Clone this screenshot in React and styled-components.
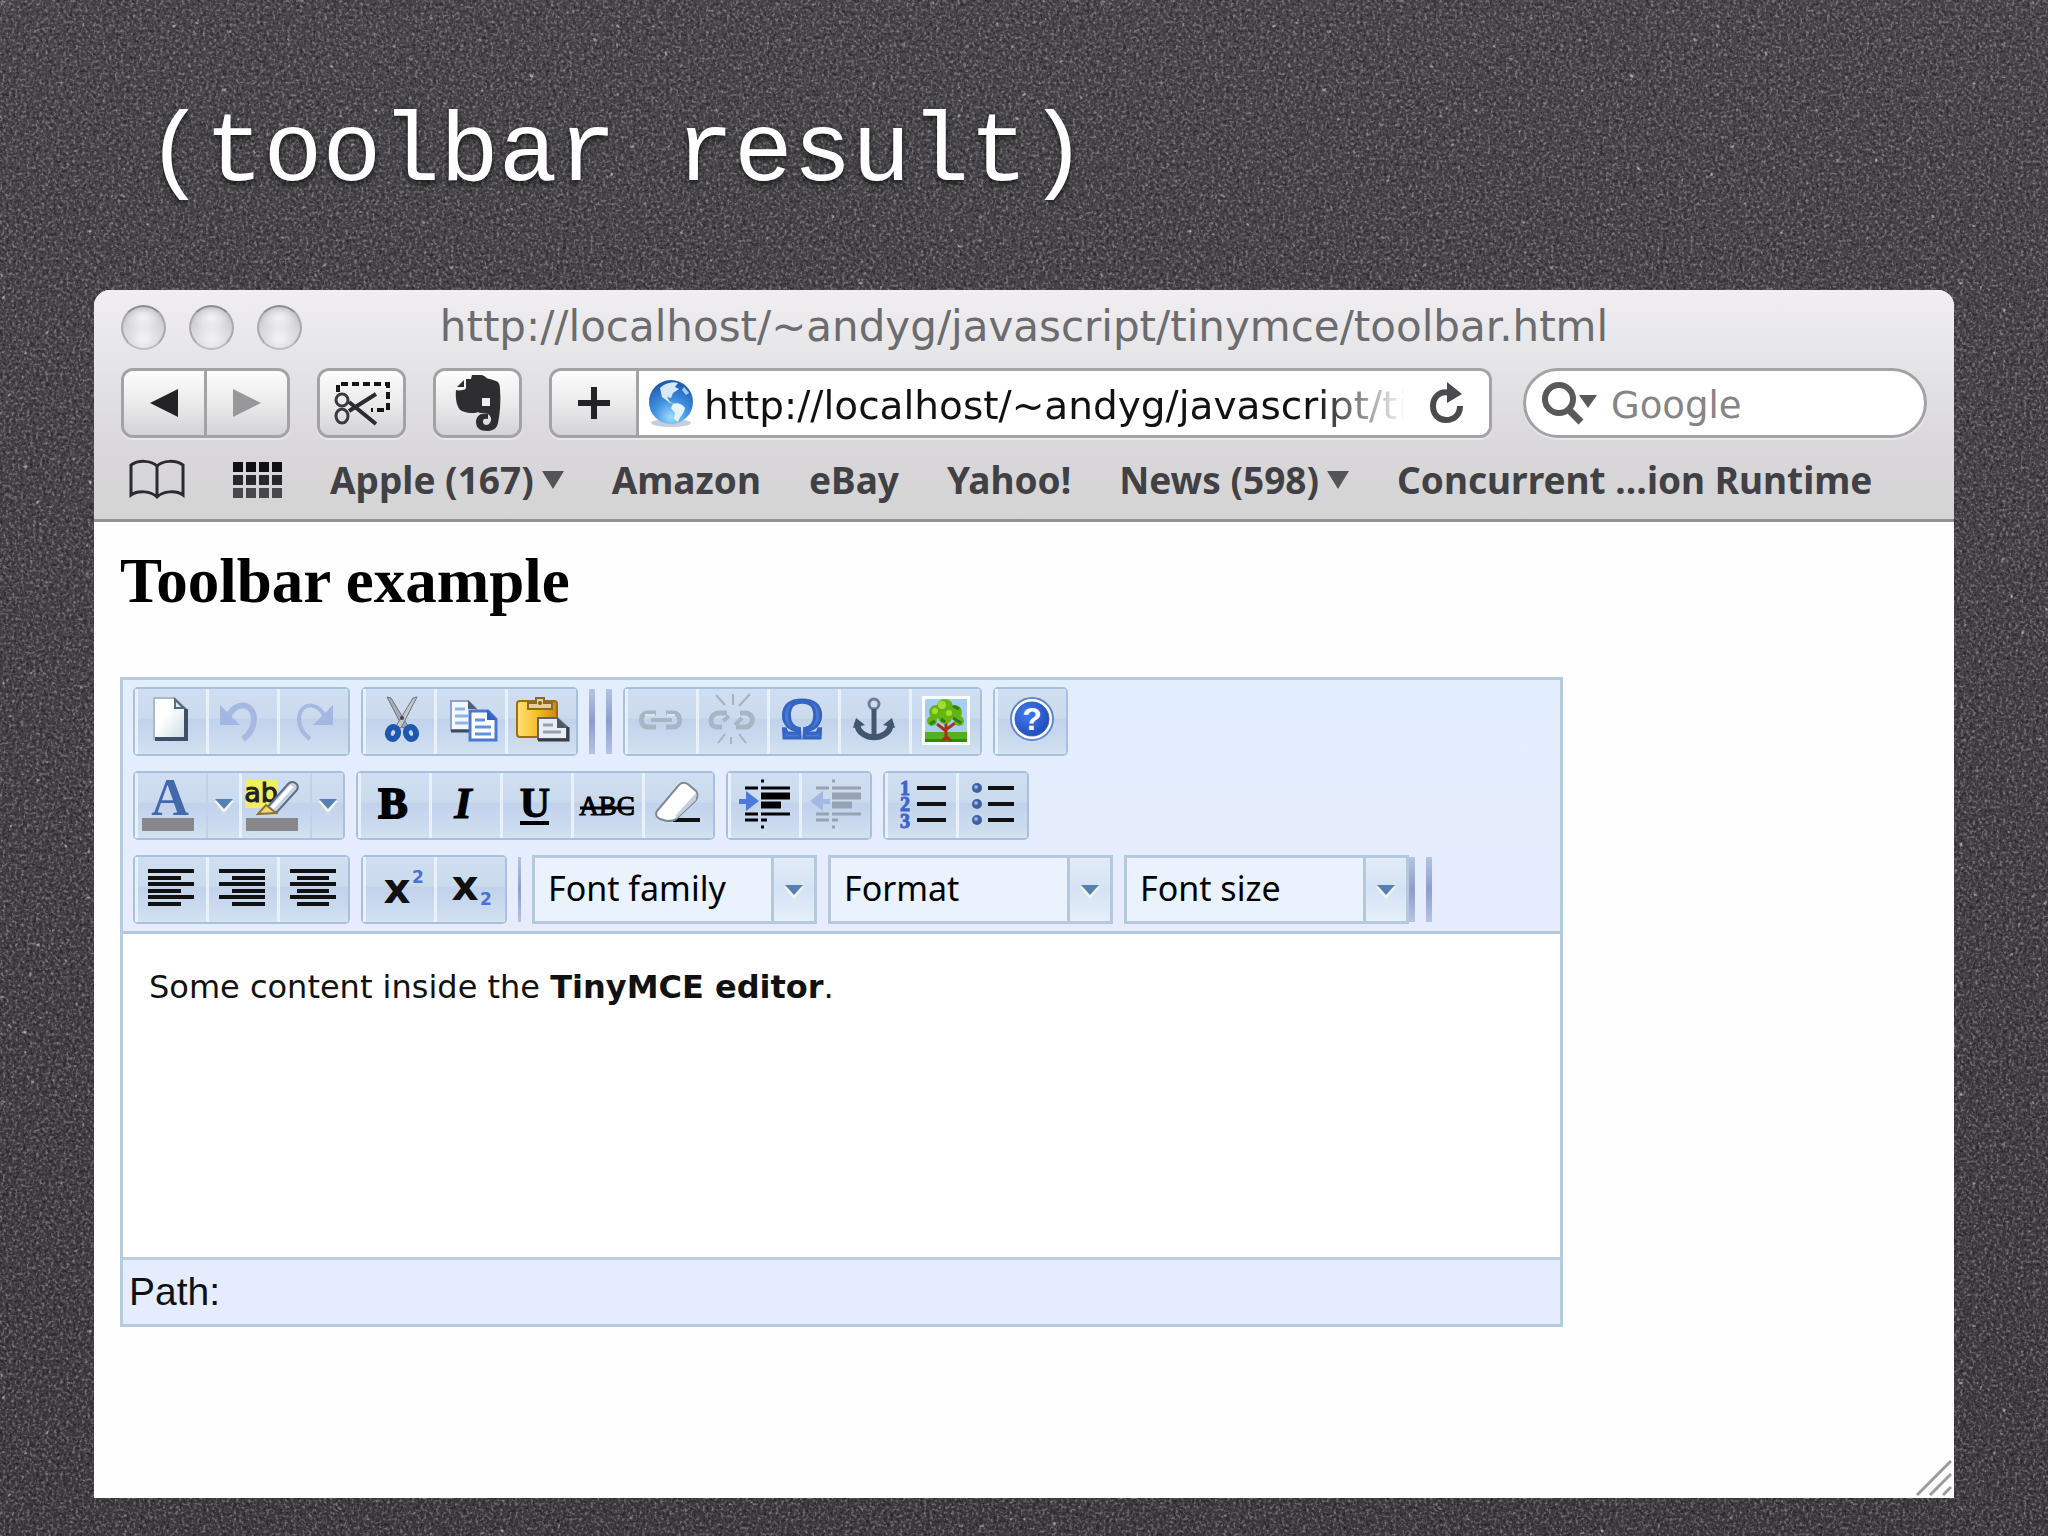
import React from "react";
import styled, { createGlobalStyle, css } from "styled-components";

/* ---------- slide background ---------- */

const noise = (seed, freq, rgb, gain, bias) => `
  <filter id="f${seed}" x="0" y="0" width="100%" height="100%" color-interpolation-filters="sRGB">
    <feTurbulence type="fractalNoise" baseFrequency="${freq}" numOctaves="2" seed="${seed}" stitchTiles="stitch"/>
    <feColorMatrix values="0 0 0 0 ${rgb} 0 0 0 0 ${rgb} 0 0 0 0 ${rgb} ${gain} 0 0 0 ${bias}"/>
  </filter>`;

const grain = encodeURIComponent(`<svg xmlns="http://www.w3.org/2000/svg" width="1100" height="1100">
  ${noise(3, 0.33, 1, 0.9, -0.42)}${noise(8, 0.3, 0, 1.1, -0.5)}${noise(5, 0.14, 1, 6, -4.5)}
  <rect width="1100" height="1100" filter="url(#f3)"/>
  <rect width="1100" height="1100" filter="url(#f8)"/>
  <rect width="1100" height="1100" filter="url(#f5)" opacity="0.6"/>
</svg>`);

const GlobalStyle = createGlobalStyle`
  *, *::before, *::after { box-sizing: border-box; }
  body { margin: 0; }
  button, input, select { font: inherit; color: inherit; margin: 0; }
`;

const Slide = styled.main`
  min-height: 100vh;
  display: flex;
  flex-direction: column;
  padding: 98px 94px 38px;
  background-image: url("data:image/svg+xml,${grain}"), linear-gradient(#474549, #3d3a3e);
`;

const SlideTitle = styled.h1`
  margin: 0 52px 80px;
  font: 400 98px/112px "Liberation Mono", monospace;
  color: #fff;
  text-shadow: 0 3px 6px rgba(0, 0, 0, 0.7);
`;

/* ---------- browser window ---------- */

const Window = styled.section`
  position: relative;
  flex: 1;
  display: flex;
  flex-direction: column;
  border-radius: 16px 16px 0 0;
  overflow: hidden;
  background: #fefefe;
`;

const Chrome = styled.header`
  padding: 0 27px;
  background: linear-gradient(#f0eef0, #e4e3e5 35%, #d9d7d9 70%, #d5d4d5);
  border-bottom: 3px solid #929193;
  font-family: "DejaVu Sans", sans-serif;
`;

const TitleBar = styled.div`
  display: grid;
  grid-template-columns: 1fr auto 1fr;
  align-items: center;
  height: 74px;
`;

const Lights = styled.div`
  display: flex;
  gap: 23px;
`;

const Light = styled.button`
  width: 45px;
  height: 45px;
  padding: 0;
  border: 2px solid #aaa8ab;
  border-top-color: #8f8d90;
  border-bottom-color: #bdbbbe;
  border-radius: 50%;
  background:
    radial-gradient(ellipse 50% 36% at 50% 26%, #f4f3f5, rgba(244, 243, 245, 0) 90%),
    radial-gradient(circle at 50% 75%, #efeef0 10%, #d2d1d4 60%, #a9a8ab);
`;

const WindowTitle = styled.h2`
  margin: 0;
  font-size: 42px;
  line-height: 74px;
  font-weight: 400;
  color: #6c6b6e;
`;

const NavRow = styled.div`
  display: flex;
  gap: 27px;
  padding-top: 4px;
`;

const frame = css`
  border: 3px solid #a3a2a5;
  box-shadow: 0 2px 0 rgba(255, 255, 255, 0.4);
`;

const ButtonFrame = styled.div`
  ${frame}
  display: flex;
  height: 70px;
  border-radius: 12px;
  overflow: hidden;
`;

const ChromeButton = styled.button`
  display: grid;
  place-items: center;
  width: ${(p) => p.$width || 82}px;
  padding: 0;
  border: 0;
  background: linear-gradient(#fcfcfd, #ebebec 50%, #d3d2d5);

  & + &, & + form {
    border-left: 3px solid #a3a2a5;
  }
`;

const AddressBar = styled(ButtonFrame)`
  flex: 1;
  min-width: 0;
`;

const AddressForm = styled.form`
  flex: 1;
  min-width: 0;
  display: flex;
  align-items: center;
  padding-left: 9px;
  background: #fff;
`;

const TextInput = styled.input`
  flex: 1;
  width: 0;
  min-width: 0;
  height: 64px;
  padding: 4px 0 0;
  border: 0;
  outline: 0;
  background: none;
`;

const AddressInput = styled(TextInput)`
  margin-left: 10px;
  font-size: 39px;
  color: #111;
  mask-image: linear-gradient(to right, #000 calc(100% - 90px), transparent);
`;

const ReloadButton = styled.button`
  display: grid;
  place-items: center;
  width: 84px;
  padding: 0;
  border: 0;
  background: none;
`;

const SearchForm = styled.form`
  ${frame}
  display: flex;
  align-items: center;
  flex: none;
  width: 404px;
  height: 70px;
  margin-left: 4px;
  padding: 0 24px 0 15px;
  border-radius: 35px;
  background: #fff;
`;

const SearchInput = styled(TextInput)`
  margin-left: 12px;
  font-size: 37px;

  &::placeholder {
    color: #858487;
    opacity: 1;
  }
`;

const Bookmarks = styled.nav`
  display: flex;
  align-items: center;
  gap: 48px;
  height: 81px;
  padding: 2px 0 0 8px;
  font: 700 37px/50px "Noto Sans", sans-serif;
  color: #414145;
  white-space: nowrap;
`;

const BookmarkIcon = styled.button`
  display: flex;
  padding: 0;
  border: 0;
  background: none;
`;

const BookmarkLink = styled.a`
  display: flex;
  align-items: center;
  gap: 8px;
  color: inherit;
  text-decoration: none;
`;

const Grip = styled.svg`
  position: absolute;
  right: 2px;
  bottom: 2px;
`;

/* ---------- page and editor ---------- */

const Page = styled.article`
  flex: 1;
  padding: 24px 26px 0;
`;

const Heading = styled.h3`
  margin: 0 0 61px;
  font: 700 63px/70px "Liberation Serif", serif;
  color: #000;
`;

const Editor = styled.div`
  max-width: 1443px;
  border: 3px solid #b7cbdd;
`;

const Toolbars = styled.div`
  display: flex;
  flex-direction: column;
  gap: 15px;
  padding: 7px 10px;
  background: linear-gradient(#e2eefd, #e5edfd 50%, #e6ecfd);
  border-bottom: 3px solid #b4c8e6;
`;

const Row = styled.div`
  display: flex;
  flex-wrap: wrap;
  gap: 11px;
`;

const Group = styled.div`
  display: flex;
  border: 2px solid #a9bfe0;
  border-radius: 5px;
`;

const buttonFill = css`
  background: linear-gradient(#cfdef0, #cbdbee 44%, #c3d2ec 47%, #c9d9ee 75%, #d2e2ef);
`;

const ToolButton = styled.button`
  ${buttonFill}
  display: flex;
  width: 71px;
  height: 65px;
  padding: 0;
  border: 0;
  box-shadow: inset 3px 0 0 rgba(236, 244, 253, 0.85);
`;

const MenuButton = styled(ToolButton)`
  width: 33px;
  box-shadow: inset 2px 0 0 #c0d2ea;
`;

const FaceSvg = styled.svg`
  display: block;
  overflow: visible;
`;

const Separator = styled.span`
  width: ${(p) => p.$width || 6}px;
  height: 65px;
  margin: 2px 0;
  background: linear-gradient(#b5c3e5, #8f9ccc 50%, #b5c3e5);
`;

const SelectBox = styled.div`
  display: grid;
  grid-template-columns: 1fr 43px;
  grid-template-rows: 63px;
  width: 285px;
  height: 69px;
  border: 3px solid #b6c8dc;
  background: #eaf2fd;
`;

const Select = styled.select`
  grid-area: 1 / 1 / 2 / 3;
  appearance: none;
  padding: 0 0 4px 13px;
  border: 0;
  outline: 0;
  background: transparent;
  font: 400 34px/50px "Noto Sans", sans-serif;
  color: #000;
`;

const SelectArrow = styled.span`
  grid-area: 1 / 2 / 2 / 3;
  display: grid;
  place-items: center;
  pointer-events: none;
  border-left: 3px solid #b6c8dc;
  background: linear-gradient(#e2ecf8, #d5e2f5 50%, #e6f0fb);
`;

const Joined = styled.div`
  display: flex;
`;

const Content = styled.div`
  min-height: 323px;
  padding: 33px 26px;
  outline: 0;
  background: #fff;
  font: 400 32px/40px "DejaVu Sans", sans-serif;
  color: #111;

  p {
    margin: 0;
  }
`;

const PathBar = styled.div`
  padding: 0 6px;
  border-top: 3px solid #b7cfdf;
  background: #e5ecfd;
  font: 400 39px/64px "Liberation Sans", sans-serif;
  color: #111;
`;

/* ---------- icons: each one is drawn on its button's 71 x 65 face ---------- */

const Face = ({ width = 71, children }) => (
  <FaceSvg width={width} height="65" viewBox={`0 0 ${width} 65`} aria-hidden="true">
    {children}
  </FaceSvg>
);

const serif = { fontFamily: "Liberation Serif, serif", fontWeight: 700 };

const lines = (list, color = "#111", w = 4) =>
  list.map(([x1, x2, y], i) => (
    <path key={i} d={`M${x1} ${y}H${x2}`} stroke={color} strokeWidth={w} />
  ));

const NewDoc = () => (
  <Face>
    <defs>
      <linearGradient id="paper" x1="0" y1="0" x2="1" y2="1">
        <stop offset="0.4" stopColor="#fff" />
        <stop offset="1" stopColor="#c9dbe4" />
      </linearGradient>
    </defs>
    <path d="M19 9H39L51 21V50H19Z" fill="url(#paper)" stroke="#a9b9cc" strokeWidth="2" />
    <path d="M51 20V50H20" fill="none" stroke="#3f4f66" strokeWidth="4" />
    <path d="M39 8V20H52Z" fill="#5a6c84" />
    <path d="M41 13V18H46Z" fill="#dfe9f2" />
  </Face>
);

const Undo = ({ flip }) => (
  <Face>
    <g transform={flip ? "translate(70 0) scale(-1 1)" : undefined}>
      <path d="M22 29C25 15 46 10 48 29C48 38 44 45 37 50" fill="none" stroke="#a7b9e2" strokeWidth={flip ? 4 : 6} />
      <path d="M14 16V36H34Z" fill="#a4b7e2" />
    </g>
  </Face>
);

const Cut = () => (
  <Face>
    <path d="M24 8L28 9L45 37L40 39Z" fill="#a8acb2" stroke="#6d737b" />
    <path d="M54 8L50 9L33 37L38 39Z" fill="#c3c6ca" stroke="#6d737b" />
    <circle cx="39" cy="29" r="2" fill="#444" />
    <ellipse cx="30" cy="44" rx="5" ry="6" fill="#c4d6ee" stroke="#1d57ae" strokeWidth="6" transform="rotate(18 30 44)" />
    <ellipse cx="48" cy="44" rx="5" ry="6" fill="#c4d6ee" stroke="#1d57ae" strokeWidth="6" transform="rotate(-18 48 44)" />
  </Face>
);

const Copy = () => (
  <Face>
    <path d="M17 12H34L42 20V41H17Z" fill="#f3f8fd" stroke="#8fa3c0" strokeWidth="2" />
    <path d="M34 11V20H43Z" fill="#4f5f76" />
    <path d="M17 42H36" stroke="#3a4a60" strokeWidth="3" />
    {lines([[21, 31, 20], [21, 34, 27], [21, 34, 34]], "#8fb2ec", 3)}
    <path d="M36 22H54L62 30V51H36Z" fill="#fff" stroke="#4a78d0" strokeWidth="3" />
    <path d="M53 21V31H63Z" fill="#2f62c8" />
    {lines([[41, 51, 31], [41, 57, 38], [41, 57, 45]], "#5f92e4", 3)}
  </Face>
);

const Paste = () => (
  <Face>
    <defs>
      <linearGradient id="board" x1="0" y1="0" x2="1" y2="0">
        <stop offset="0" stopColor="#ffe27a" />
        <stop offset="0.5" stopColor="#f7bf24" />
        <stop offset="1" stopColor="#c98a10" />
      </linearGradient>
    </defs>
    <rect x="12" y="12" width="40" height="36" rx="3" fill="url(#board)" stroke="#a06c10" strokeWidth="2" />
    <path d="M23 20V14H31V9H39V14H47V20Z" fill="#e7cf9a" stroke="#8c6a2c" strokeWidth="2" />
    <circle cx="35" cy="14" r="2" fill="#8c5a12" />
    <path d="M33 29H52L62 38V50H33Z" fill="#e9eef4" stroke="#5c6672" strokeWidth="2" />
    <path d="M33 51H63V38" fill="none" stroke="#3b3f45" strokeWidth="3" />
    <path d="M52 28V39H62Z" fill="#4f5966" />
    {lines([[38, 48, 36], [38, 56, 43]], "#98a2ae", 3)}
  </Face>
);

const Link = () => (
  <Face>
    <g fill="none" stroke="#a9b5c3" strokeWidth="5">
      <path d="M31 24H23C14 24 14 38 23 38H31" />
      <path d="M41 24H48C57 24 57 38 48 38H41" />
      <path d="M26 31H47" strokeWidth="4" />
    </g>
    <path d="M20 26H30M42 26H50" stroke="#dde6ee" strokeWidth="2" />
  </Face>
);

const Unlink = () => (
  <Face>
    <g fill="none" stroke="#a9b5c3" strokeWidth="5">
      <path d="M31 24H23C13 24 12 38 21 38H26" />
      <path d="M44 24H49C59 24 59 38 48 38H40" />
      <path d="M27 32L33 27M39 36L46 29" strokeWidth="4" />
    </g>
    <path d="M20 6L29 16M37 5V16M54 5L43 17M22 54L29 45M35 55V48M50 54L43 45" stroke="#a9b2bc" strokeWidth="2" />
  </Face>
);

const Omega = () => (
  <Face>
    <text x="35" y="49" textAnchor="middle" fontSize="58" fontFamily="Liberation Serif, serif" fill="#4a78d6" stroke="#3565c2" strokeWidth="3">
      Ω
    </text>
  </Face>
);

const Anchor = () => (
  <Face>
    <g fill="none" stroke="#43566f" strokeWidth="4">
      <circle cx="36" cy="15" r="5" stroke="#6c7c92" strokeWidth="3" />
      <path d="M36 20V48" strokeWidth="5" />
      <path d="M19 34C20 53 52 53 53 34" strokeWidth="6" />
    </g>
    <path d="M15 39L18 29L27 36ZM57 39L54 29L45 36Z" fill="#43566f" />
  </Face>
);

const Tree = () => (
  <Face>
    <rect x="13" y="7" width="48" height="49" fill="#fff" />
    <rect x="16" y="10" width="42" height="35" fill="#a6cdf4" />
    <rect x="16" y="43" width="42" height="10" fill="#54b021" />
    <rect x="16" y="50" width="42" height="3" fill="#2f8a14" />
    <path d="M37 51V34M37 42L28 35M38 40L46 34M37 48L33 52M38 48L42 52" stroke="#a8321c" strokeWidth="3" fill="none" />
    <g fill="#63b414">
      <circle cx="36" cy="18" r="8" />
      <circle cx="27" cy="23" r="7" />
      <circle cx="46" cy="23" r="7" />
      <circle cx="23" cy="32" r="5" />
      <circle cx="50" cy="32" r="5" />
      <circle cx="36" cy="28" r="7" />
    </g>
    <g fill="#a4dc2c">
      <circle cx="33" cy="16" r="4" />
      <circle cx="26" cy="22" r="3" />
      <circle cx="40" cy="24" r="3" />
    </g>
    <path d="M44 17L50 20M44 29L52 34M21 35L26 32M32 30L36 33" stroke="#2f7c10" strokeWidth="3" />
  </Face>
);

const Help = () => (
  <Face>
    <defs>
      <radialGradient id="help" cx="0.35" cy="0.35" r="0.8">
        <stop offset="0" stopColor="#3f7cf4" />
        <stop offset="1" stopColor="#1c46b0" />
      </radialGradient>
    </defs>
    <circle cx="37" cy="30" r="21" fill="#fff" stroke="#5f86c8" strokeWidth="2" />
    <circle cx="37" cy="30" r="17" fill="url(#help)" stroke="#3561bd" />
    <text x="37" y="41" textAnchor="middle" fontSize="32" fontWeight="700" fontFamily="Liberation Sans, sans-serif" fill="#fff">
      ?
    </text>
  </Face>
);

const Arrow = () => (
  <g>
    <path d="M8 28L18 40L28 28Z" fill="#f4f6e4" />
    <path d="M9 26H27L18 36Z" fill="#5680b6" />
  </g>
);

const Forecolor = () => (
  <Face>
    <text x="35" y="42" textAnchor="middle" fontSize="52" fill="#4468ae" {...serif}>
      A
    </text>
    <rect x="7" y="45" width="52" height="13" fill="#88888c" />
  </Face>
);

const Backcolor = () => (
  <Face>
    <rect x="6" y="7" width="32" height="28" fill="#f3ee60" />
    <text x="22" y="29" textAnchor="middle" fontSize="27" fontFamily="DejaVu Sans, sans-serif" fill="#222" stroke="#222">
      ab
    </text>
    <path d="M27 36L49 11C53 7 61 10 58 17L37 40Z" fill="#c6d3e4" stroke="#5c6c84" strokeWidth="2" />
    <path d="M33 35L53 13" stroke="#fff" strokeWidth="4" />
    <path d="M19 41L27 32L37 40Z" fill="#f4d878" stroke="#8a7430" strokeWidth="2" />
    <rect x="7" y="45" width="52" height="13" fill="#88888c" />
  </Face>
);

const Bold = () => (
  <Face>
    <text x="35" y="45" textAnchor="middle" fontSize="44" stroke="#000" strokeWidth="2" {...serif}>B</text>
  </Face>
);

const Italic = () => (
  <Face>
    <text x="34" y="45" textAnchor="middle" fontSize="45" fontStyle="italic" stroke="#000" {...serif}>I</text>
  </Face>
);

const Underline = () => (
  <Face>
    <text x="35" y="44" textAnchor="middle" fontSize="42" stroke="#000" {...serif}>U</text>
    {lines([[20, 49, 50]], "#000")}
  </Face>
);

const Strike = () => (
  <Face>
    <text x="36" y="42" textAnchor="middle" fontSize="27" fontFamily="Liberation Serif, serif" stroke="#000">ABC</text>
    {lines([[9, 63, 35]], "#000", 3)}
  </Face>
);

const EraserIcon = () => (
  <Face>
    <path d="M31 47H58" stroke="#111" strokeWidth="4" />
    <path d="M15 38L37 12C39 9 44 9 47 12L54 18C56 20 56 24 54 27L34 46C32 48 28 48 25 48L18 46C14 44 13 41 15 38Z" fill="#fff" stroke="#7e8898" strokeWidth="2" />
    <path d="M34 42L54 20V27L34 46Z" fill="#c6cfda" />
  </Face>
);

const IndentLines = ({ color }) => (
  <g>
    {lines([[17, 30, 15], [17, 30, 41], [17, 30, 47], [33, 62, 15], [33, 62, 41], [33, 39, 47]], color, 3)}
    {lines([[33, 62, 23], [33, 53, 32]], color, 7)}
    {lines([[33, 36, 8], [33, 36, 54]], color, 3)}
  </g>
);

const Indent = () => (
  <Face>
    <IndentLines color="#000" />
    <path d="M11 26H18V18L31 28L18 38V31H11Z" fill="#4d78dc" />
  </Face>
);

const Outdent = () => (
  <Face>
    <IndentLines color="#97a2b2" />
    <path d="M31 26H24V18L11 28L24 38V31H31Z" fill="#a3b9e4" />
  </Face>
);

const NumList = () => (
  <Face>
    {[["1", 22], ["2", 38], ["3", 55]].map(([n, y]) => (
      <text key={n} x="20" y={y} textAnchor="middle" fontSize="20" fill="#3c66cc" stroke="#3c66cc" {...serif}>{n}</text>
    ))}
    {lines([[32, 61, 15], [32, 61, 31], [32, 61, 47]])}
  </Face>
);

const BulletList = () => (
  <Face>
    {[15, 31, 47].map((y) => (
      <g key={y}>
        <circle cx="21" cy={y} r="5" fill="#3f5f9f" />
        <circle cx="20" cy={y - 1} r="2" fill="#8fb0f0" />
      </g>
    ))}
    {lines([[32, 58, 15], [32, 58, 31], [32, 58, 47]])}
  </Face>
);

const Align = ({ a, b }) => (
  <Face>
    {lines([14, 27, 40].map((y) => [13, 59, y]))}
    {lines([21, 34, 47].map((y) => [a, b, y]))}
  </Face>
);

const Script = ({ y, x, ny, nx }) => (
  <Face>
    <text x={x} y={y} textAnchor="middle" fontSize="42" fontWeight="700" fontFamily="DejaVu Sans, sans-serif" fill="#111">x</text>
    <text x={nx} y={ny} textAnchor="middle" fontSize="17" fontWeight="700" fontFamily="DejaVu Sans, sans-serif" fill="#4a70d0">2</text>
  </Face>
);

const Evernote = () => (
  <svg width="48" height="66" viewBox="0 0 48 66" aria-hidden="true">
    <path
      d="M12 8H17L18 4H27C31 4 32 8 36 8L42 10C45 11 46 14 46 18C47 30 46 42 44 52C43 58 38 60 33 60C26 60 22 57 22 51C22 44 28 41 34 43V48C30 47 29 48 29 51C29 54 33 55 35 53C38 50 38 46 34 43C31 41 26 43 24 41C21 43 12 42 8 40C3 38 1 28 2 19C5 20 12 19 12 17Z"
      fill="#2e2e31"
    />
    <path d="M3 16L10 9V16Z" fill="#2e2e31" />
    <rect x="28" y="27" width="8" height="8" fill="#eee" />
  </svg>
);

const Clip = () => (
  <svg width="58" height="46" viewBox="0 0 58 46" aria-hidden="true">
    <path d="M5 12V4H55V30H38" fill="none" stroke="#161618" strokeWidth="4" strokeDasharray="7 4" />
    <path d="M16 22L43 44M16 31L43 14" stroke="#2c2c2e" strokeWidth="4" />
    <ellipse cx="9" cy="20" rx="6" ry="6" fill="none" stroke="#3a3a3d" strokeWidth="3" />
    <ellipse cx="9" cy="36" rx="6" ry="7" fill="none" stroke="#3a3a3d" strokeWidth="3" />
  </svg>
);

const Globe = () => (
  <svg width="46" height="48" viewBox="0 0 46 48" aria-hidden="true">
    <defs>
      <radialGradient id="sea" cx="0.5" cy="0.85" r="0.9">
        <stop offset="0" stopColor="#9fdcfc" />
        <stop offset="0.45" stopColor="#3d8fe0" />
        <stop offset="1" stopColor="#1a4fa6" />
      </radialGradient>
    </defs>
    <ellipse cx="23" cy="44" rx="20" ry="4" fill="#c3cfdd" />
    <circle cx="23" cy="23" r="22" fill="url(#sea)" />
    <path d="M12 9C17 4 25 2 30 4L27 8L31 10L25 14L23 19L19 18L22 23L27 25L22 24L14 18Z" fill="#d6e9f8" />
    <path d="M25 25C30 23 35 26 37 29C36 35 31 38 30 43L26 40L27 34L23 29Z" fill="#e6f5fd" />
    <path d="M36 8L41 14L38 16L34 11Z" fill="#a9cdf0" />
  </svg>
);

const Reload = () => (
  <svg width="36" height="42" viewBox="0 0 36 42" aria-hidden="true">
    <path d="M21 11C10 8 4 16 4 24C4 33 10 38 17 38C25 38 31 33 31 24" fill="none" stroke="#4b4b4e" strokeWidth="6" />
    <path d="M18 0L33 12L18 21Z" fill="#4b4b4e" />
  </svg>
);

const Magnifier = () => (
  <svg width="58" height="46" viewBox="0 0 58 46" aria-hidden="true">
    <circle cx="18" cy="19" r="14" fill="none" stroke="#59595c" strokeWidth="6" />
    <path d="M27 29L40 42" stroke="#59595c" strokeWidth="7" />
    <path d="M38 15H56L47 28Z" fill="#59595c" />
  </svg>
);

const Book = () => (
  <svg width="56" height="42" viewBox="0 0 56 42" aria-hidden="true">
    <path d="M28 7C22 1 9 1 2 6V36C9 31 22 32 28 38C34 32 47 31 54 36V6C47 1 34 1 28 7V38" fill="none" stroke="#2b2b2e" strokeWidth="3" />
  </svg>
);

const Grid = () => (
  <svg width="49" height="36" viewBox="0 0 49 36" aria-hidden="true">
    {[0, 13, 26].map((y, r) =>
      [0, 13, 26, 39].map((x) => (
        <rect key={`${x}-${y}`} x={x} y={y} width="10" height="10" fill={["#101012", "#29292b", "#48484b"][r]} />
      ))
    )}
  </svg>
);

const Caret = () => (
  <svg width="22" height="18" viewBox="0 0 22 18" aria-hidden="true">
    <path d="M0 0H22L11 18Z" fill="#545457" />
  </svg>
);

const Triangle = ({ left }) => (
  <svg width="28" height="30" viewBox="0 0 28 30" aria-hidden="true">
    <path d={left ? "M0 15L28 1V29Z" : "M28 15L0 1V29Z"} fill={left ? "#232326" : "#98979a"} />
  </svg>
);

const Plus = () => (
  <svg width="34" height="34" viewBox="0 0 34 34" aria-hidden="true">
    <path d="M17 1V33M1 17H33" stroke="#232326" strokeWidth="6" />
  </svg>
);

/* ---------- composition ---------- */

const PAGE_URL = "http://localhost/~andyg/javascript/tinymce/toolbar.html";

const Tools = ({ items }) => (
  <Group>
    {items.map(([label, icon, menu]) => {
      const Tool = menu ? MenuButton : ToolButton;
      return (
        <Tool key={label} type="button" aria-label={label}>
          {icon}
        </Tool>
      );
    })}
  </Group>
);

const menuArrow = (
  <Face width={33}>
    <Arrow />
  </Face>
);

const ListBox = ({ label }) => (
  <SelectBox>
    <Select aria-label={label} defaultValue="">
      <option value="">{label}</option>
    </Select>
    <SelectArrow>
      <svg width="36" height="62" viewBox="0 0 36 62" aria-hidden="true">
        <Arrow />
      </svg>
    </SelectArrow>
  </SelectBox>
);

const noSubmit = (e) => e.preventDefault();

export default function App() {
  return (
    <>
      <GlobalStyle />
      <Slide>
        <SlideTitle>(toolbar result)</SlideTitle>
        <Window>
          <Chrome>
            <TitleBar>
              <Lights>
                <Light type="button" aria-label="Close" />
                <Light type="button" aria-label="Minimize" />
                <Light type="button" aria-label="Zoom" />
              </Lights>
              <WindowTitle>{PAGE_URL}</WindowTitle>
            </TitleBar>
            <NavRow>
              <ButtonFrame>
                <ChromeButton type="button" aria-label="Back" $width={80}><Triangle left /></ChromeButton>
                <ChromeButton type="button" aria-label="Forward" $width={83}><Triangle /></ChromeButton>
              </ButtonFrame>
              <ButtonFrame>
                <ChromeButton type="button" aria-label="Web clip" $width={83}><Clip /></ChromeButton>
              </ButtonFrame>
              <ButtonFrame>
                <ChromeButton type="button" aria-label="Evernote" $width={83}><Evernote /></ChromeButton>
              </ButtonFrame>
              <AddressBar>
                <ChromeButton type="button" aria-label="Add bookmark" $width={84}><Plus /></ChromeButton>
                <AddressForm onSubmit={noSubmit}>
                  <Globe />
                  <AddressInput aria-label="Address" defaultValue={PAGE_URL} />
                  <ReloadButton type="button" aria-label="Reload"><Reload /></ReloadButton>
                </AddressForm>
              </AddressBar>
              <SearchForm onSubmit={noSubmit}>
                <Magnifier />
                <SearchInput aria-label="Search" placeholder="Google" />
              </SearchForm>
            </NavRow>
            <Bookmarks aria-label="Bookmarks">
              <BookmarkIcon type="button" aria-label="Show all bookmarks"><Book /></BookmarkIcon>
              <BookmarkIcon type="button" aria-label="Top sites"><Grid /></BookmarkIcon>
              <BookmarkLink href="#apple">Apple (167)<Caret /></BookmarkLink>
              <BookmarkLink href="#amazon">Amazon</BookmarkLink>
              <BookmarkLink href="#ebay">eBay</BookmarkLink>
              <BookmarkLink href="#yahoo">Yahoo!</BookmarkLink>
              <BookmarkLink href="#news">News (598)<Caret /></BookmarkLink>
              <BookmarkLink href="#runtime">Concurrent …ion Runtime</BookmarkLink>
            </Bookmarks>
          </Chrome>

          <Page>
            <Heading>Toolbar example</Heading>
            <Editor>
              <Toolbars>
                <Row>
                  <Tools items={[["New document", <NewDoc />], ["Undo", <Undo />], ["Redo", <Undo flip />]]} />
                  <Tools items={[["Cut", <Cut />], ["Copy", <Copy />], ["Paste", <Paste />]]} />
                  <Separator />
                  <Separator />
                  <Tools
                    items={[
                      ["Insert link", <Link />],
                      ["Unlink", <Unlink />],
                      ["Special character", <Omega />],
                      ["Anchor", <Anchor />],
                      ["Insert image", <Tree />],
                    ]}
                  />
                  <Tools items={[["Help", <Help />]]} />
                </Row>
                <Row>
                  <Tools
                    items={[
                      ["Text color", <Forecolor />],
                      ["Text color menu", menuArrow, true],
                      ["Background color", <Backcolor />],
                      ["Background color menu", menuArrow, true],
                    ]}
                  />
                  <Tools
                    items={[
                      ["Bold", <Bold />],
                      ["Italic", <Italic />],
                      ["Underline", <Underline />],
                      ["Strikethrough", <Strike />],
                      ["Remove formatting", <EraserIcon />],
                    ]}
                  />
                  <Tools items={[["Indent", <Indent />], ["Outdent", <Outdent />]]} />
                  <Tools items={[["Numbered list", <NumList />], ["Bulleted list", <BulletList />]]} />
                </Row>
                <Row>
                  <Tools
                    items={[
                      ["Align left", <Align a={13} b={46} />],
                      ["Align right", <Align a={26} b={59} />],
                      ["Align center", <Align a={20} b={52} />],
                    ]}
                  />
                  <Tools
                    items={[
                      ["Superscript", <Script x={34} y={46} nx={55} ny={26} />],
                      ["Subscript", <Script x={31} y={43} nx={52} ny={48} />],
                    ]}
                  />
                  <Separator $width={3} />
                  <ListBox label="Font family" />
                  <ListBox label="Format" />
                  <Joined>
                    <ListBox label="Font size" />
                    <Separator />
                  </Joined>
                  <Separator />
                </Row>
              </Toolbars>
              <Content contentEditable suppressContentEditableWarning role="textbox" aria-label="Editor content" spellCheck={false}>
                <p>
                  Some content inside the <strong>TinyMCE editor</strong>.
                </p>
              </Content>
              <PathBar>Path:</PathBar>
            </Editor>
          </Page>
          <Grip width="36" height="36" viewBox="0 0 36 36" aria-hidden="true">
            <path d="M1 35L35 1M14 35L35 14M27 35L35 27" stroke="#9d9b9e" strokeWidth="3" />
          </Grip>
        </Window>
      </Slide>
    </>
  );
}
